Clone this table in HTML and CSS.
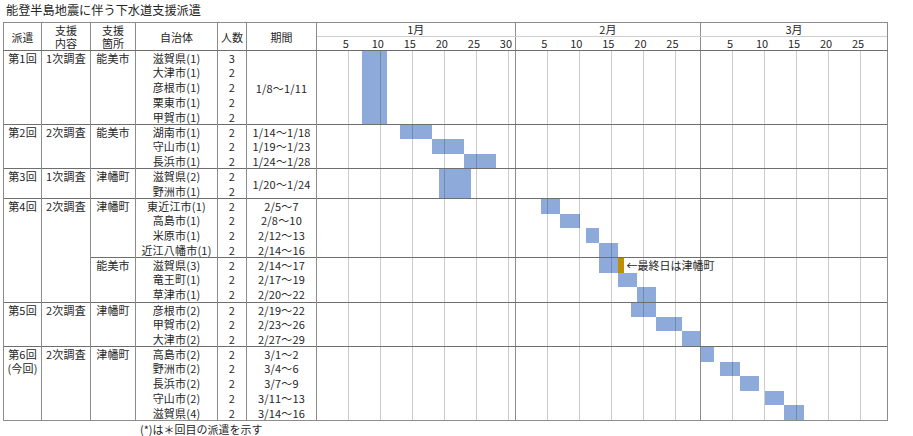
FILE: index.html
```html
<!DOCTYPE html>
<html lang="ja">
<head>
<meta charset="utf-8">
<title>能登半島地震に伴う下水道支援派遣</title>
<link rel="stylesheet" href="styles.css">
</head>
<body>
<div class="page">
  <div class="title">能登半島地震に伴う下水道支援派遣</div>
  <table class="sheet">
    <colgroup>
      <col class="c-haken"><col class="c-naiyo"><col class="c-basho"><col class="c-jichi"><col class="c-nin"><col class="c-kikan"><col class="c-chart">
    </colgroup>
    <thead>
      <tr>
        <th>派遣</th>
        <th class="two"><span>支援</span><span>内容</span></th>
        <th class="two"><span>支援</span><span>箇所</span></th>
        <th>自治体</th>
        <th>人数</th>
        <th>期間</th>
        <th class="chart-head">
          <div class="months">
            <div class="m jan">1月</div><div class="m feb">2月</div><div class="m mar">3月</div>
          </div>
          <div class="days">
            <div class="m jan"><span class="t"><i>5</i></span><span class="t"><i>10</i></span><span class="t"><i>15</i></span><span class="t"><i>20</i></span><span class="t"><i>25</i></span><span class="t"><i>30</i></span></div>
            <div class="m feb"><span class="t"><i>5</i></span><span class="t"><i>10</i></span><span class="t"><i>15</i></span><span class="t"><i>20</i></span><span class="t"><i>25</i></span></div>
            <div class="m mar"><span class="t"><i>5</i></span><span class="t"><i>10</i></span><span class="t"><i>15</i></span><span class="t"><i>20</i></span><span class="t"><i>25</i></span></div>
          </div>
        </th>
      </tr>
    </thead>
    <tbody>
      <!-- 第1回 -->
      <tr class="g">
        <td rowspan="5">第1回</td><td rowspan="5">1次調査</td><td rowspan="5">能美市</td>
        <td>滋賀県(1)</td><td>3</td><td rowspan="5" class="mid">1/8～1/11</td>
        <td rowspan="5" class="chart"><div class="gantt" style="--h:5">
          <div class="bar" style="--s:7;--n:4;--r:0;--k:5"></div>
          <div class="grid"><div class="m jan"></div><div class="m feb"></div><div class="m mar"></div></div>
        </div></td>
      </tr>
      <tr><td>大津市(1)</td><td>2</td></tr>
      <tr><td>彦根市(1)</td><td>2</td></tr>
      <tr><td>栗東市(1)</td><td>2</td></tr>
      <tr><td>甲賀市(1)</td><td>2</td></tr>
      <!-- 第2回 -->
      <tr class="g">
        <td rowspan="3">第2回</td><td rowspan="3">2次調査</td><td rowspan="3">能美市</td>
        <td>湖南市(1)</td><td>2</td><td>1/14～1/18</td>
        <td rowspan="3" class="chart"><div class="gantt" style="--h:3">
          <div class="bar" style="--s:13;--n:5;--r:0"></div>
          <div class="bar" style="--s:18;--n:5;--r:1"></div>
          <div class="bar" style="--s:23;--n:5;--r:2"></div>
          <div class="grid"><div class="m jan"></div><div class="m feb"></div><div class="m mar"></div></div>
        </div></td>
      </tr>
      <tr><td>守山市(1)</td><td>2</td><td>1/19～1/23</td></tr>
      <tr><td>長浜市(1)</td><td>2</td><td>1/24～1/28</td></tr>
      <!-- 第3回 -->
      <tr class="g">
        <td rowspan="2">第3回</td><td rowspan="2">1次調査</td><td rowspan="2">津幡町</td>
        <td>滋賀県(2)</td><td>2</td><td rowspan="2" class="mid">1/20～1/24</td>
        <td rowspan="2" class="chart"><div class="gantt" style="--h:2">
          <div class="bar" style="--s:19;--n:5;--r:0;--k:2"></div>
          <div class="grid"><div class="m jan"></div><div class="m feb"></div><div class="m mar"></div></div>
        </div></td>
      </tr>
      <tr><td>野洲市(1)</td><td>2</td></tr>
      <!-- 第4回 -->
      <tr class="g">
        <td rowspan="7">第4回</td><td rowspan="7">2次調査</td><td rowspan="4">津幡町</td>
        <td>東近江市(1)</td><td>2</td><td>2/5～7</td>
        <td rowspan="4" class="chart"><div class="gantt" style="--h:4">
          <div class="bar" style="--s:35;--n:3;--r:0"></div>
          <div class="bar" style="--s:38;--n:3;--r:1"></div>
          <div class="bar" style="--s:42;--n:2;--r:2"></div>
          <div class="bar" style="--s:44;--n:3;--r:3"></div>
          <div class="grid"><div class="m jan"></div><div class="m feb"></div><div class="m mar"></div></div>
        </div></td>
      </tr>
      <tr><td>高島市(1)</td><td>2</td><td>2/8～10</td></tr>
      <tr><td>米原市(1)</td><td>2</td><td>2/12～13</td></tr>
      <tr><td>近江八幡市(1)</td><td>2</td><td>2/14～16</td></tr>
      <tr class="sub">
        <td rowspan="3">能美市</td>
        <td>滋賀県(3)</td><td>2</td><td>2/14～17</td>
        <td rowspan="3" class="chart"><div class="gantt" style="--h:3">
          <div class="bar" style="--s:44;--n:3;--r:0"></div>
          <div class="bar last" style="--s:47;--n:1;--r:0"></div>
          <div class="bar" style="--s:47;--n:3;--r:1"></div>
          <div class="bar" style="--s:50;--n:3;--r:2"></div>
          <div class="grid"><div class="m jan"></div><div class="m feb"></div><div class="m mar"></div></div>
          <span class="note" style="--s:48;--r:0">←最終日は津幡町</span>
        </div></td>
      </tr>
      <tr><td>竜王町(1)</td><td>2</td><td>2/17～19</td></tr>
      <tr><td>草津市(1)</td><td>2</td><td>2/20～22</td></tr>
      <!-- 第5回 -->
      <tr class="g">
        <td rowspan="3">第5回</td><td rowspan="3">2次調査</td><td rowspan="3">津幡町</td>
        <td>彦根市(2)</td><td>2</td><td>2/19～22</td>
        <td rowspan="3" class="chart"><div class="gantt" style="--h:3">
          <div class="bar" style="--s:49;--n:4;--r:0"></div>
          <div class="bar" style="--s:53;--n:4;--r:1"></div>
          <div class="bar" style="--s:57;--n:3;--r:2"></div>
          <div class="grid"><div class="m jan"></div><div class="m feb"></div><div class="m mar"></div></div>
        </div></td>
      </tr>
      <tr><td>甲賀市(2)</td><td>2</td><td>2/23～26</td></tr>
      <tr><td>大津市(2)</td><td>2</td><td>2/27～29</td></tr>
      <!-- 第6回 -->
      <tr class="g last-group">
        <td rowspan="5" class="two"><span>第6回</span><span>(今回)</span></td><td rowspan="5">2次調査</td><td rowspan="5">津幡町</td>
        <td>高島市(2)</td><td>2</td><td>3/1～2</td>
        <td rowspan="5" class="chart"><div class="gantt" style="--h:5">
          <div class="bar" style="--s:60;--n:2;--r:0"></div>
          <div class="bar" style="--s:63;--n:3;--r:1"></div>
          <div class="bar" style="--s:66;--n:3;--r:2"></div>
          <div class="bar" style="--s:70;--n:3;--r:3"></div>
          <div class="bar" style="--s:73;--n:3;--r:4"></div>
          <div class="grid"><div class="m jan"></div><div class="m feb"></div><div class="m mar"></div></div>
        </div></td>
      </tr>
      <tr><td>野洲市(2)</td><td>2</td><td>3/4～6</td></tr>
      <tr><td>長浜市(2)</td><td>2</td><td>3/7～9</td></tr>
      <tr><td>守山市(2)</td><td>2</td><td>3/11～13</td></tr>
      <tr class="end"><td>滋賀県(4)</td><td>2</td><td>3/14～16</td></tr>
    </tbody>
  </table>
  <div class="foot">(*)は＊回目の派遣を示す</div>
</div>
</body>
</html>
```
FILE: styles.css
```css
:root {
  --d: 6.404px;
  --rh: 14.8px;
  --line: #8c8c8c;
  --dark: #6e6e6e;
  --grid: rgba(0, 0, 0, 0.2);
}

body {
  margin: 0;
  background: #fff;
  color: #262626;
  font-family: "Noto Sans CJK JP", "Noto Sans", sans-serif;
}

.page {
  padding: 2px 0 0 3px;
}

.title {
  font-size: 12.2px;
  line-height: 16px;
  height: 20px;
  padding-left: 3px;
}

.sheet {
  border-collapse: collapse;
  table-layout: fixed;
  width: 884px;
  font-size: 11px;
}

.c-haken { width: 38px; }
.c-naiyo { width: 49px; }
.c-basho { width: 45px; }
.c-jichi { width: 82px; }
.c-nin { width: 29px; }
.c-kikan { width: 70px; }
.c-chart { width: 571px; }

.sheet th,
.sheet td {
  padding: 0;
  border-left: 1px solid var(--line);
  border-right: 1px solid var(--line);
  text-align: center;
  vertical-align: top;
  font-weight: normal;
  white-space: nowrap;
  line-height: 14px;
}

.sheet tbody td {
  letter-spacing: 0.2px;
}

.sheet thead th {
  border-top: 1px solid var(--line);
  border-bottom: 1px solid var(--dark);
  vertical-align: middle;
  height: 27px;
}

.sheet .two span {
  display: block;
  height: 13px;
  line-height: 13px;
}

.sheet td.two span {
  height: 14px;
  line-height: 14px;
}

.sheet tbody tr {
  height: var(--rh);
}

.sheet tr.g > td,
.sheet tr.sub > td {
  border-top: 1px solid var(--dark);
}

.sheet tr.end > td,
.sheet tr.last-group > td[rowspan] {
  border-bottom: 1px solid var(--line);
}

.sheet td.mid {
  vertical-align: middle;
}

/* chart header */
.chart-head {
  padding: 0;
}

.months,
.days {
  display: flex;
  height: 13px;
  line-height: 13px;
}

.days {
  border-top: 1px solid #cfcfcf;
}

.m {
  box-sizing: border-box;
  flex: 0 0 auto;
  border-right: 1px solid var(--line);
}

.m.jan { width: calc(var(--d) * 31); }
.m.feb { width: calc(var(--d) * 29); }
.m.mar { width: calc(var(--d) * 29); border-right: none; }

.months .m {
  text-align: center;
}

.days .m {
  display: flex;
}

.t {
  flex: 0 0 calc(var(--d) * 5);
  display: flex;
  justify-content: flex-end;
}

.t i {
  font-style: normal;
  width: 0;
  margin-right: calc(var(--d) / 2);
  display: flex;
  justify-content: center;
}

/* gantt body */
.sheet td.chart {
  vertical-align: top;
  letter-spacing: 0;
}

.gantt {
  position: relative;
  height: calc(var(--h) * var(--rh) - 1px);
}

.bar {
  position: absolute;
  left: calc(var(--s) * var(--d));
  width: calc(var(--n) * var(--d));
  top: calc(100% * var(--r) / var(--h));
  height: calc(100% * var(--k, 1) / var(--h));
  background: #8eaadb;
}

.bar.last {
  background: #bf8f00;
}

.grid {
  position: absolute;
  inset: 0;
  display: flex;
  pointer-events: none;
}

.grid .m {
  height: 100%;
  background: repeating-linear-gradient(
    to right,
    transparent 0,
    transparent calc(var(--d) * 5 - 1px),
    var(--grid) calc(var(--d) * 5 - 1px),
    var(--grid) calc(var(--d) * 5)
  );
}

.note {
  position: absolute;
  left: calc(var(--s) * var(--d) + 2px);
  top: calc(100% * var(--r) / var(--h));
  line-height: var(--rh);
  font-size: 11px;
  white-space: nowrap;
}

.foot {
  font-size: 11px;
  line-height: 13px;
  margin-top: 2px;
  padding-left: 137px;
}
```
